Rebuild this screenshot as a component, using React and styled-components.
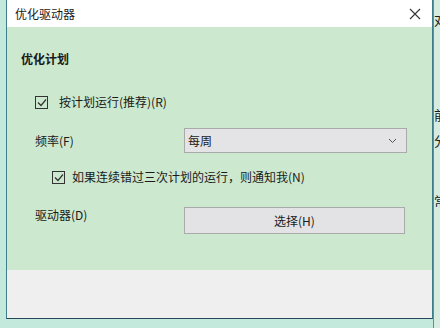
import React from 'react';
import styled, { createGlobalStyle } from 'styled-components';

const GlobalStyle = createGlobalStyle`
  html, body {
    margin: 0;
    padding: 0;
    background: #c3e9dc;
    font-family: "Noto Sans CJK SC", "Liberation Sans", sans-serif;
    font-size: 12px;
    color: #1a1a1a;
  }
`;

const Screen = styled.div`
  width: 440px;
  height: 328px;
  display: flex;
  overflow: hidden;
`;

const Dialog = styled.div`
  margin-left: 6px;
  width: 425px;
  height: 318px;
  display: flex;
  flex-direction: column;
  border-left: 1px solid #3f7d8b;
  border-right: 1px solid #3f7d8b;
  border-bottom: 1px solid #28465a;
`;

const TitleBar = styled.div`
  height: 27px;
  background: #ffffff;
  display: flex;
  align-items: center;
  justify-content: space-between;
  padding: 0 11px 0 8px;
  font-size: 12px;
`;

const Body = styled.div`
  flex: 1;
  background: #cce8cf;
  padding: 24px 0 0 14px;
  display: flex;
  flex-direction: column;
`;

const Heading = styled.div`
  font-weight: bold;
  line-height: 16px;
`;

const Row = styled.div`
  display: flex;
  align-items: ${p => p.$top ? 'flex-start' : 'center'};
  margin-top: ${p => p.$mt}px;
  padding-left: ${p => p.$indent}px;
  line-height: 16px;
`;

const Box = styled.span`
  width: 11px;
  height: 11px;
  border: 1px solid #333;
  display: inline-flex;
  align-items: center;
  justify-content: center;
  margin-right: ${p => p.$gap}px;
  background: transparent;
`;

const Label = styled.div`
  width: 149px;
`;

const Select = styled.div`
  width: 223px;
  height: 25px;
  box-sizing: border-box;
  background: #e4e3e6;
  border: 1px solid #a9aaa9;
  display: flex;
  align-items: center;
  justify-content: space-between;
  padding: 0 9px 0 3px;
`;

const Button = styled.div`
  width: 221px;
  height: 27px;
  box-sizing: border-box;
  background: #e3e2e4;
  border: 1px solid #a9aaa9;
  display: flex;
  align-items: center;
  justify-content: center;
`;

const Footer = styled.div`
  height: 48px;
  background: #efefef;
`;

const Side = styled.div`
  flex: 1;
  border-left: 1px solid #5f8f98;
  background: #d6ece0;
  overflow: hidden;
  display: flex;
  flex-direction: column;
  font-size: 13px;
  line-height: 16px;
  white-space: nowrap;
`;

const SideChar = styled.div`
  margin-top: ${p => p.$mt}px;
`;

const Check = () => (
  <svg width="10" height="9" viewBox="0 0 10 9">
    <path d="M1 4.5 L4 7.5 L9 1.5" fill="none" stroke="#333" strokeWidth="1.2" />
  </svg>
);

const Close = () => (
  <svg width="12" height="12" viewBox="0 0 12 12">
    <path d="M1 1 L11 11 M11 1 L1 11" stroke="#333" strokeWidth="1.1" />
  </svg>
);

const Chevron = () => (
  <svg width="9" height="6" viewBox="0 0 9 6">
    <path d="M1 1 L4.5 4.5 L8 1" fill="none" stroke="#555" strokeWidth="1" />
  </svg>
);

export default function App() {
  return (
    <Screen>
      <GlobalStyle />
      <Dialog>
        <TitleBar>
          <span>优化驱动器</span>
          <Close />
        </TitleBar>
        <Body>
          <Heading>优化计划</Heading>
          <Row $mt={27} $indent={14}>
            <Box $gap={11}><Check /></Box>
            按计划运行(推荐)(R)
          </Row>
          <Row $mt={18} $indent={14}>
            <Label>频率(F)</Label>
            <Select>
              <span>每周</span>
              <Chevron />
            </Select>
          </Row>
          <Row $mt={16} $indent={31}>
            <Box $gap={7}><Check /></Box>
            如果连续错过三次计划的运行，则通知我(N)
          </Row>
          <Row $mt={22} $indent={14} $top>
            <Label>驱动器(D)</Label>
            <Button>选择(H)</Button>
          </Row>
        </Body>
        <Footer />
      </Dialog>
      <Side>
        <SideChar $mt={12}>对</SideChar>
        <SideChar $mt={79}>前</SideChar>
        <SideChar $mt={10}>分</SideChar>
        <SideChar $mt={44}>常</SideChar>
      </Side>
    </Screen>
  );
}
